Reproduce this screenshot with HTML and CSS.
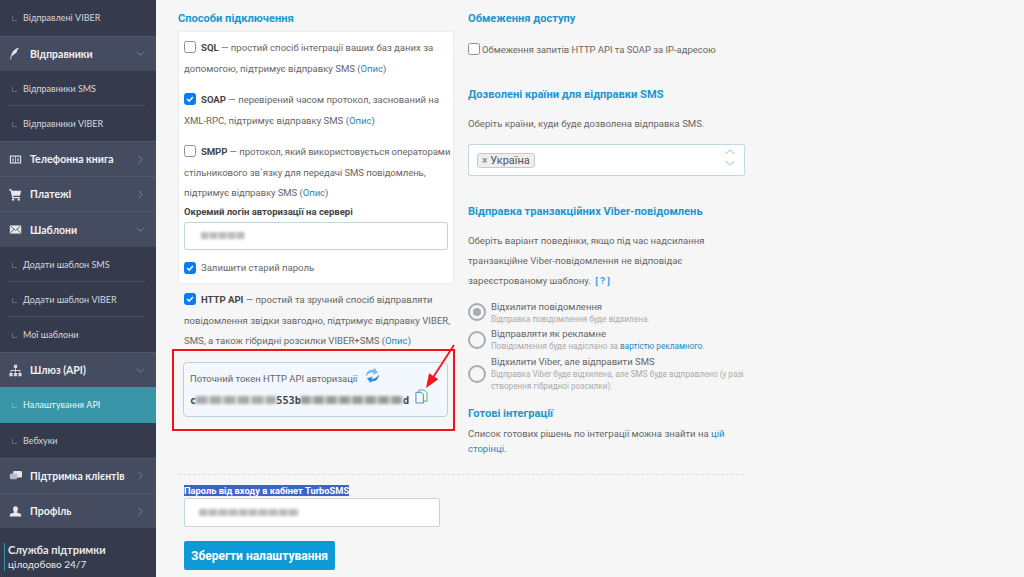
FILE: index.html
```html
<!DOCTYPE html>
<html lang="uk">
<head>
<meta charset="utf-8">
<title>Налаштування API</title>
<link rel="stylesheet" href="styles.css">
</head>
<body>
<div class="app">
<aside class="sidebar">
  <nav class="menu">
    <a class="sub first-sub"><span class="tick"></span>Відправлені VIBER</a>
    <a class="head"><svg class="ico" viewBox="0 0 16 16"><path d="M1.500 15.500C2 10 4 3 12 .5c-.3 1.500-.8 2.500-1.500 3.500l-1.500.3 1 .5C9.500 6.500 8.500 7.500 7.500 8.200l-1.500 0 .8.7C5.500 10 4.500 10.500 3.500 10.700 3 12.500 2.500 14 2.300 15.500z" fill="#e6e7ea"/></svg><span class="label">Відправники</span><svg class="chev" viewBox="0 0 10 10"><path d="M1 3l4 4 4-4"/></svg></a>
    <a class="sub line"><span class="tick"></span>Відправники SMS</a>
    <a class="sub"><span class="tick"></span>Відправники VIBER</a>
    <a class="head"><svg class="ico" viewBox="0 0 16 16"><path fill-rule="evenodd" d="M1 3h14v10H1zM2.500 4.500v7H7.500v-7zM8.500 4.500v7h5v-7z" fill="#d9dbdf"/><path d="M4 6.500h2v3.500H4zM10 6.500h2v3.500h-2z" fill="#b9bcc4"/></svg><span class="label">Телефонна книга</span><svg class="chev" viewBox="0 0 10 10"><path d="M3 1l4 4-4 4"/></svg></a>
    <a class="head"><svg class="ico" viewBox="0 0 16 16"><path d="M0 1.500h3l.6 2H15l-1.500 6H5l.4 1.500h8.100v1.500H4L2 3H0z" fill="#e6e7ea"/><circle cx="5" cy="14.300" r="1.500" fill="#e6e7ea"/><circle cx="12" cy="14.300" r="1.500" fill="#e6e7ea"/></svg><span class="label">Платежі</span><svg class="chev" viewBox="0 0 10 10"><path d="M3 1l4 4-4 4"/></svg></a>
    <a class="head"><svg class="ico" viewBox="0 0 16 16"><rect x="1" y="3" width="14" height="10" fill="#e6e7ea"/><path d="M2 4l6 5 6-5M2 12l4-4.500M14 12l-4-4.500" fill="none" stroke="#454c5f" stroke-width="1"/></svg><span class="label">Шаблони</span><svg class="chev" viewBox="0 0 10 10"><path d="M1 3l4 4 4-4"/></svg></a>
    <a class="sub line"><span class="tick"></span>Додати шаблон SMS</a>
    <a class="sub line"><span class="tick"></span>Додати шаблон VIBER</a>
    <a class="sub"><span class="tick"></span>Мої шаблони</a>
    <a class="head"><svg class="ico" viewBox="0 0 16 16"><path d="M6 1h4v4H8.500v2.500H14V11h1.500v4h-4v-4H13V8.500H8.500V11H10v4H6v-4h1.500V8.500H3V11h1.500v4h-4v-4H2V7.500h5.500V5H6z" fill="#d6d8dc"/></svg><span class="label">Шлюз (API)</span><svg class="chev" viewBox="0 0 10 10"><path d="M1 3l4 4 4-4"/></svg></a>
    <a class="sub active"><span class="tick"></span>Налаштування API</a>
    <a class="sub"><span class="tick"></span>Вебхуки</a>
    <a class="head"><svg class="ico" viewBox="0 0 16 16"><rect x="5" y="2.500" width="11" height="8" rx="1.500" fill="#e6e7ea"/><rect x="1" y="5.500" width="9" height="7" rx="1.500" fill="#b9bbc3"/></svg><span class="label">Підтримка клієнтів</span><svg class="chev" viewBox="0 0 10 10"><path d="M3 1l4 4-4 4"/></svg></a>
    <a class="head"><svg class="ico" viewBox="0 0 16 16"><path d="M5 5a3 3.500 0 0 1 6 0c0 2-1 3-1.500 4 1 1 5 1 5.500 3v2H1v-2c.5-2 4.500-2 5.500-3C6 8 5 7 5 5z" fill="#e6e7ea"/></svg><span class="label">Профіль</span><svg class="chev" viewBox="0 0 10 10"><path d="M3 1l4 4-4 4"/></svg></a>
  </nav>
  <div class="support">
    <div class="support-box"><strong>Служба підтримки</strong><span>цілодобово 24/7</span></div>
  </div>
</aside>
<main class="main">
  <div class="columns">
    <section class="col-left">
      <h3>Способи підключення</h3>
      <div class="card">
        <p class="opt"><span class="cb"></span><b>SQL</b> — простий спосіб інтеграції ваших баз даних за допомогою, підтримує відправку SMS (<a>Опис</a>)</p>
        <p class="opt"><span class="cb on"><svg viewBox="0 0 12 12"><path d="M2.500 6l2.500 2.500 4.500-5"/></svg></span><b>SOAP</b> — перевірений часом протокол, заснований на XML-RPC, підтримує відправку SMS (<a>Опис</a>)</p>
        <p class="opt tight"><span class="cb"></span><b>SMPP</b> — протокол, який використовується операторами стільникового зв`язку для передачі SMS повідомлень, підтримує відправку SMS (<a>Опис</a>)</p>
        <label class="field-label">Окремий логін авторизації на сервері</label>
        <div class="input login"><span class="blur b1"></span></div>
        <div class="keep"><span class="cb on"><svg viewBox="0 0 12 12"><path d="M2.500 6l2.500 2.500 4.500-5"/></svg></span>Залишити старий пароль</div>
      </div>
      <p class="opt http"><span class="cb on"><svg viewBox="0 0 12 12"><path d="M2.500 6l2.500 2.500 4.500-5"/></svg></span><b>HTTP API</b> — простий та зручний спосіб відправляти повідомлення звідки завгодно, підтримує відправку VIBER, SMS, а також гібридні розсилки VIBER+SMS (<a>Опис</a>)</p>
      <div class="token">
        <div class="token-title">Поточний токен HTTP API авторизації
          <svg class="refresh" viewBox="0 0 16 16"><path d="M1 9C1 5 4 1 9 2l1-2 4 5-6 2 1-2.500C6 4 3 6 1 9z" fill="#7ab8ec"/><path d="M1 9C1 5 4 1 9 2l1-2 4 5-6 2 1-2.500C6 4 3 6 1 9z" fill="#2f8ede" transform="rotate(180 8 8)"/></svg>
        </div>
        <div class="token-value"><span>c</span><span class="blur b2"></span><span>553b</span><span class="blur b3"></span><span>d</span>
          <svg class="copy" viewBox="0 0 14 16"><path d="M4 3V1h6l3 3v9H9" fill="#eef7f1" stroke="#55a67c"/><path d="M1 3.500h6l2 2v9.500H1z" fill="#f4f9fe" stroke="#4d83b6"/></svg>
        </div>
      </div>
    </section>
    <section class="col-right">
      <h3>Обмеження доступу</h3>
      <div class="ip-row"><span class="cb"></span>Обмеження запитів HTTP API та SOAP за IP-адресою</div>
      <h3 class="countries">Дозволені країни для відправки SMS</h3>
      <p class="text">Оберіть країни, куди буде дозволена відправка SMS.</p>
      <div class="select"><span class="tag"><i>×</i>Україна</span>
        <svg class="updown" viewBox="0 0 10 17"><path d="M.5 5l4.500-4 4.500 4M.5 12l4.500 4 4.500-4"/></svg></div>
      <h3 class="viber">Відправка транзакційних Viber-повідомлень</h3>
      <p class="text para">Оберіть варіант поведінки, якщо під час надсилання транзакційне Viber-повідомлення не відповідає зареєстрованому шаблону. <a class="q">[ ? ]</a></p>
      <div class="radios">
        <div class="radio"><span class="rd sel"></span><div><div class="r-t">Відхилити повідомлення</div><div class="r-s">Відправка повідомлення буде відхилена.</div></div></div>
        <div class="radio"><span class="rd"></span><div><div class="r-t">Відправляти як рекламне</div><div class="r-s">Повідомлення буде надіслано за <a>вартістю рекламного</a>.</div></div></div>
        <div class="radio"><span class="rd"></span><div><div class="r-t">Відхилити Viber, але відправити SMS</div><div class="r-s">Відправка Viber буде відхилена, але SMS буде відправлено (у разі створення гібридної розсилки).</div></div></div>
      </div>
      <h3 class="ready">Готові інтеграції</h3>
      <p class="text list">Список готових рішень по інтеграції можна знайти на <a>цій сторінці</a>.</p>
    </section>
  </div>
  <div class="bottom">
    <label class="pass-label"><mark>Пароль від входу в кабінет TurboSMS</mark></label>
    <div class="input pass"><span class="blur b4"></span></div>
    <button class="save">Зберегти налаштування</button>
  </div>
</main>
</div>
<div class="redbox"></div>
<svg class="arrow" viewBox="0 0 50 70"><path d="M34 5L12 39" stroke="#f4141c" stroke-width="1.800" fill="none"/><path d="M6 48l3.100-14.800 9.200 6z" fill="#f4141c"/></svg>
</body>
</html>
```
FILE: styles.css
```css
* { box-sizing: border-box; }
html, body { margin: 0; padding: 0; height: 577px; overflow: hidden; }
body { position: relative; background: #f6f6f6; font-family: "Roboto", sans-serif; color: #555; }
a { color: #2a86bd; }
.app { display: flex; height: 577px; }
.sidebar { width: 156px; flex: none; background: #353b4c; display: flex; flex-direction: column; font-family: "Lato", sans-serif; }
.menu { display: flex; flex-direction: column; }
.head { height: 35.2px; background: #454c5f; border-top: 1px solid #525869; display: flex; align-items: center; padding: 0 11px 0 9px; color: #f1f2f4; font-weight: 700; font-size: 10.500px; }
.head .ico { width: 13px; height: 13px; margin-right: 8px; flex: none; }
.head .label { flex: 1; white-space: nowrap; }
.chev { width: 9px; height: 9px; flex: none; fill: none; stroke: #868b99; stroke-width: 1; }
.sub { height: 35.2px; display: flex; align-items: center; padding-left: 12px; color: #d6d8de; font-size: 9px; position: relative; white-space: nowrap; }
.sub.first-sub { height: 35.5px; }
.sub.line::after { content: ""; position: absolute; left: 8px; right: 11px; bottom: 0; height: 1px; background: #464c5d; }
.tick { width: 5px; height: 5px; border-left: 1px solid rgba(255,255,255,.25); border-bottom: 1px solid rgba(255,255,255,.25); margin-right: 6px; margin-top: 2px; }
.sub.active { background: #3995a8; color: #eef6f8; }
.support { padding: 15px 0 0 4px; }
.support-box { border-left: 1px solid #3995a8; padding-left: 3px; color: #e8e9ec; display: flex; flex-direction: column; line-height: 14px; height: 28px; font-size: 10px; }
.support-box strong { font-size: 11px; }
.main { flex: 1; padding: 0 0 0 22px; min-width: 0; }
.columns { display: flex; height: 474px; }
.col-left { width: 290px; flex: none; }
.col-right { width: 276px; }
h3 { margin: 0; color: #1a98cf; font-size: 11.100px; font-weight: 700; line-height: 16px; padding-top: 11px; height: 26px; white-space: nowrap; font-family: "Roboto", sans-serif; }
.card { width: 276px; height: 253px; background: #fff; border: 1px solid #ececec; padding: 6px 2px 0 5px; margin-top: 5px; }
.opt { margin: 0 0 11px; font-size: 9.550px; line-height: 20.500px; color: #666; }
.opt.tight { margin: 0; letter-spacing: -.07px; }
.opt b { color: #444; }
.cb { display: inline-block; width: 12px; height: 12px; border: 1px solid #8e8e8e; border-radius: 2.500px; background: #fff; vertical-align: -2px; margin-right: 5px; }
.cb.on { background: #0b7bf5; border-color: #0b7bf5; }
.cb svg { display: block; width: 10px; height: 10px; fill: none; stroke: #fff; stroke-width: 1.800; }
.field-label { display: block; font-size: 9.500px; font-weight: 700; color: #444; line-height: 16px; }
.input { background: #fff; border: 1px solid #bcd9df; border-radius: 2px; display: flex; align-items: center; }
.input.login { width: 264px; height: 28px; margin-top: 2px; }
.keep { font-size: 9.550px; color: #666; margin-top: 12px; display: flex; align-items: center; }
.blur { display: block; background: #b5b5b5; filter: blur(1.500px); height: 7px; }
.b1 { width: 44px; margin-left: 16px; background: repeating-linear-gradient(90deg, #bbb 0 7px, #e2e2e2 7px 9px); }
.opt.http { width: 268px; margin: 6px 0 0 6px; }
.token { width: 265px; height: 55px; margin: 10px 0 0 5px; background: #f2f8fe; border: 1px solid #b5d5dc; border-radius: 4px; padding: 8px 6px 0 6px; }
.token-title { font-size: 9.450px; color: #666; display: flex; align-items: center; height: 16px; white-space: nowrap; }
.refresh { width: 15px; height: 15px; margin-left: 8px; margin-top: -7px; flex: none; }
.token-value { display: flex; align-items: center; font-family: "DejaVu Sans Mono", monospace; font-size: 10.300px; font-weight: 700; color: #444; margin-top: 6px; height: 14px; }
.b2 { width: 80px; height: 8px; background: repeating-linear-gradient(90deg, #aaa 0 11px, #ddd 11px 14px); }
.b3 { width: 102px; height: 8px; background: repeating-linear-gradient(90deg, #999 0 9px, #c8c8c8 9px 13px); }
.copy { width: 13px; height: 15px; margin-left: 6px; margin-top: -7px; flex: none; }
.ip-row { font-size: 9.450px; color: #666; margin-top: 16px; display: flex; align-items: center; white-space: nowrap; height: 14px; }
.ip-row .cb { margin-right: 2px; }
.countries { margin-top: 20px; }
.text { margin: 12px 0 0; font-size: 9.550px; line-height: 20.300px; color: #666; }
.select { height: 31.500px; width: 277px; background: #fff; border: 1px solid #bcd9df; border-radius: 2px; margin-top: 10px; display: flex; align-items: center; padding-left: 8px; position: relative; }
.tag { background: #eee; border: 1px solid #c9c9c9; border-radius: 3px; font-size: 11px; line-height: 13px; padding: 0 4px; color: #555; }
.tag i { font-style: normal; font-weight: 700; color: #888; margin-right: 3px; font-size: 10px; }
.updown { position: absolute; right: 9px; top: 4px; width: 10px; height: 17px; fill: none; stroke: #bcd4da; stroke-width: 1.200; }
.viber { margin-top: 17px; }
.para { margin-top: 12px; }
.q { color: #37a6e8; font-weight: 700; margin-left: 2px; }
.radios { display: flex; flex-direction: column; gap: 2.700px; margin-top: 8px; width: 280px; }
.radio { display: flex; align-items: center; }
.rd { width: 18px; height: 18px; border: 2px solid #a6adb5; border-radius: 50%; flex: none; margin-right: 5px; position: relative; }
.rd.sel::after { content: ""; position: absolute; left: 3px; top: 3px; width: 8px; height: 8px; border-radius: 50%; background: #a6adb5; }
.r-t { font-size: 9.500px; line-height: 13px; color: #666; }
.r-s { font-size: 8.200px; line-height: 12px; color: #aaa; }
.ready { margin-top: 3px; }
.list { margin-top: 5px; line-height: 15px; }
.bottom { width: 566px; border-top: 1px dashed #d8dcdc; height: 103px; padding: 9px 0 0 6px; }
.pass-label { display: block; font-size: 9.300px; font-weight: 700; line-height: 13px; }
mark { background: #3d64c6; color: #fff; }
.input.pass { width: 256px; height: 29px; margin-top: 1px; }
.b4 { width: 100px; margin-left: 14px; background: repeating-linear-gradient(90deg, #bbb 0 8px, #e0e0e0 8px 10px); }
.save { display: block; margin-top: 14px; width: 151px; height: 29px; background: #0d9ad6; border: none; border-radius: 2px; color: #fff; font-family: "Roboto", sans-serif; font-weight: 700; font-size: 12px; padding: 0; }
.redbox { position: absolute; left: 172px; top: 349px; width: 283px; height: 82px; border: 2px solid #f2111b; }
.arrow { position: absolute; left: 420px; top: 340px; width: 50px; height: 70px; }
```
